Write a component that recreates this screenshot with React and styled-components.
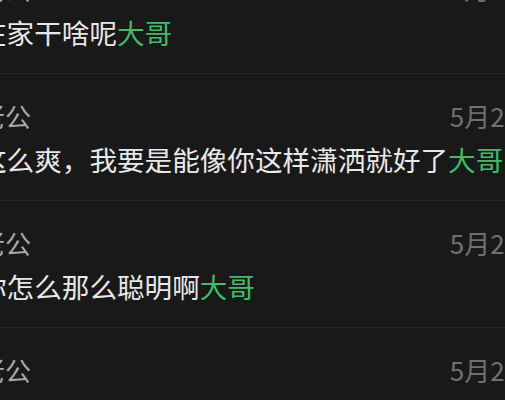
import React from "react";
import styled, { createGlobalStyle } from "styled-components";

const Global = createGlobalStyle`
  html, body {
    margin: 0;
    padding: 0;
    background: #191919;
    overflow: hidden;
  }
  body {
    font-family: "Noto Sans CJK SC", "Noto Sans", sans-serif;
  }
`;

const Screen = styled.div`
  width: 505px;
  height: 400px;
  overflow: hidden;
  background: #191919;
`;

const List = styled.div`
  width: 566px;
  margin-left: -21px;
  margin-top: -53px;
  display: flex;
  flex-direction: column;
`;

const Row = styled.div`
  box-sizing: border-box;
  height: 127px;
  padding: 25px 0 0 0;
  border-bottom: 1px solid #262626;
  display: flex;
  flex-direction: column;
  gap: 8px;
`;

const Header = styled.div`
  display: flex;
  justify-content: space-between;
  align-items: center;
  height: 34px;
`;

const Name = styled.span`
  font-size: 26px;
  line-height: 34px;
  color: #ababab;
  white-space: nowrap;
`;

const Time = styled.span`
  font-size: 26px;
  line-height: 34px;
  color: #707070;
  white-space: nowrap;
`;

const Message = styled.div`
  font-size: 27.6px;
  line-height: 36px;
  color: #e8e8e8;
  white-space: nowrap;
`;

const Highlight = styled.span`
  color: #3dbd68;
`;

const items = [
  { name: "老公", time: "5月20日", text: "在家干啥呢" },
  { name: "老公", time: "5月20日", text: "这么爽，我要是能像你这样潇洒就好了" },
  { name: "老公", time: "5月20日", text: "你怎么那么聪明啊" },
  { name: "老公", time: "5月20日", text: "你在家干什么呢" },
];

export default function App() {
  return (
    <>
      <Global />
      <Screen>
        <List>
          {items.map((it, i) => (
            <Row key={i}>
              <Header>
                <Name>{it.name}</Name>
                <Time>{it.time}</Time>
              </Header>
              <Message>
                {it.text}
                <Highlight>大哥</Highlight>
              </Message>
            </Row>
          ))}
        </List>
      </Screen>
    </>
  );
}
